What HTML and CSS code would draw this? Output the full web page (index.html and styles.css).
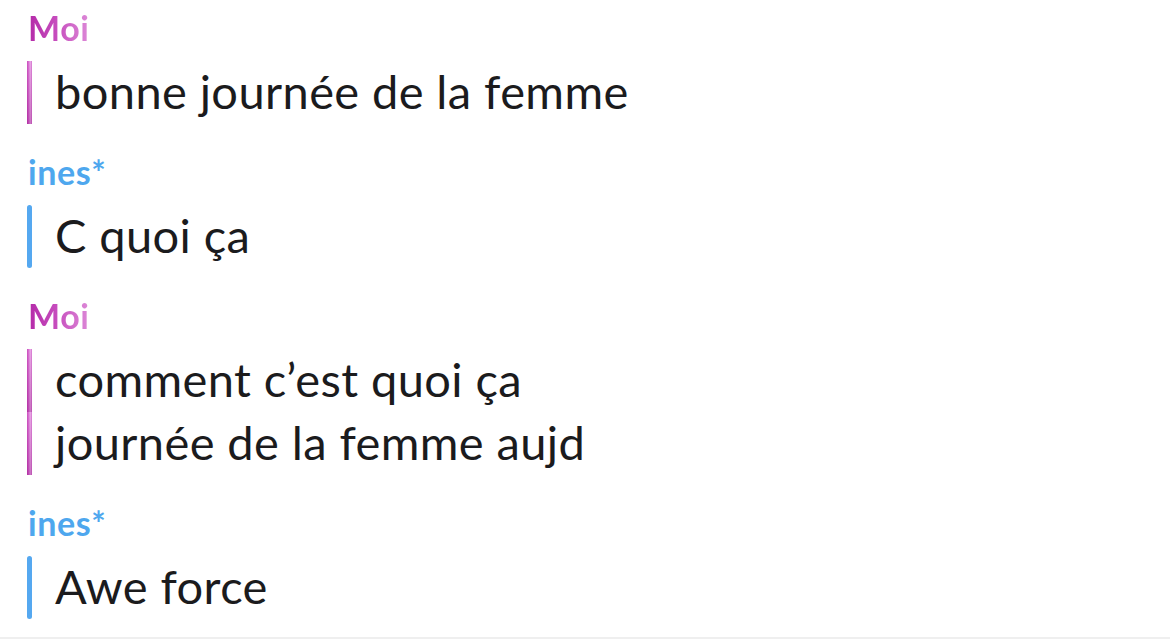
FILE: index.html
```html
<!DOCTYPE html>
<html lang="fr">
<head>
    <meta charset="UTF-8">
    <meta name="viewport" content="width=device-width, initial-scale=1.0">
    <title>Chat</title>
    <link rel="stylesheet" href="styles.css">
</head>
<body>
    <div class="chat">
        <div class="group me">
            <div class="name">Moi</div>
            <div class="msg"><span class="bar"></span><span class="text">bonne journée de la femme</span></div>
        </div>

        <div class="group friend">
            <div class="name">ines*</div>
            <div class="msg"><span class="bar"></span><span class="text">C quoi ça</span></div>
        </div>

        <div class="group me">
            <div class="name">Moi</div>
            <div class="msg"><span class="bar"></span><span class="text">comment c’est quoi ça</span></div>
            <div class="msg"><span class="bar"></span><span class="text">journée de la femme aujd</span></div>
        </div>

        <div class="group friend">
            <div class="name">ines*</div>
            <div class="msg"><span class="bar"></span><span class="text">Awe force</span></div>
        </div>
    </div>
</body>
</html>
```

FILE: styles.css
```css
body {
    margin: 0;
    background: #fff;
    font-family: Lato, "Open Sans", sans-serif;
    color: #1b1b1d;
}
.chat {
    height: 639px;
    box-sizing: border-box;
    padding: 8px 0 0 27px;
    border-bottom: 2px solid #efefef;
    overflow: hidden;
}
.group + .group {
    margin-top: 28px;
}
.name {
    font-size: 34px;
    font-weight: 700;
    line-height: 40px;
    letter-spacing: 0.6px;
    margin: 0 0 13px 1px;
}
.me .name {
    color: #c03cb6;
    background: linear-gradient(90deg, #b42aa8 0%, #c64cbd 45%, #dd8ad8 100%);
    -webkit-background-clip: text;
    background-clip: text;
    -webkit-text-fill-color: transparent;
    display: inline-block;
}
.friend .name {
    color: #4ea7ee;
}
.msg {
    display: flex;
    height: 63px;
    align-items: center;
}
.bar {
    width: 5px;
    align-self: stretch;
    flex-shrink: 0;
}
.me .bar {
    background:
        linear-gradient(180deg, rgba(255, 255, 255, 0.1) 0%, rgba(120, 0, 100, 0.25) 100%),
        linear-gradient(90deg, #c23ab4 0%, #d765d0 35%, #e9a4e6 65%, #cf62c8 100%);
}
.friend .bar {
    background: #55a8f0;
    border-radius: 3px;
}
.text {
    margin: -3px 0 0 23px;
    font-size: 47px;
    line-height: 63px;
    letter-spacing: 0.4px;
}
```
